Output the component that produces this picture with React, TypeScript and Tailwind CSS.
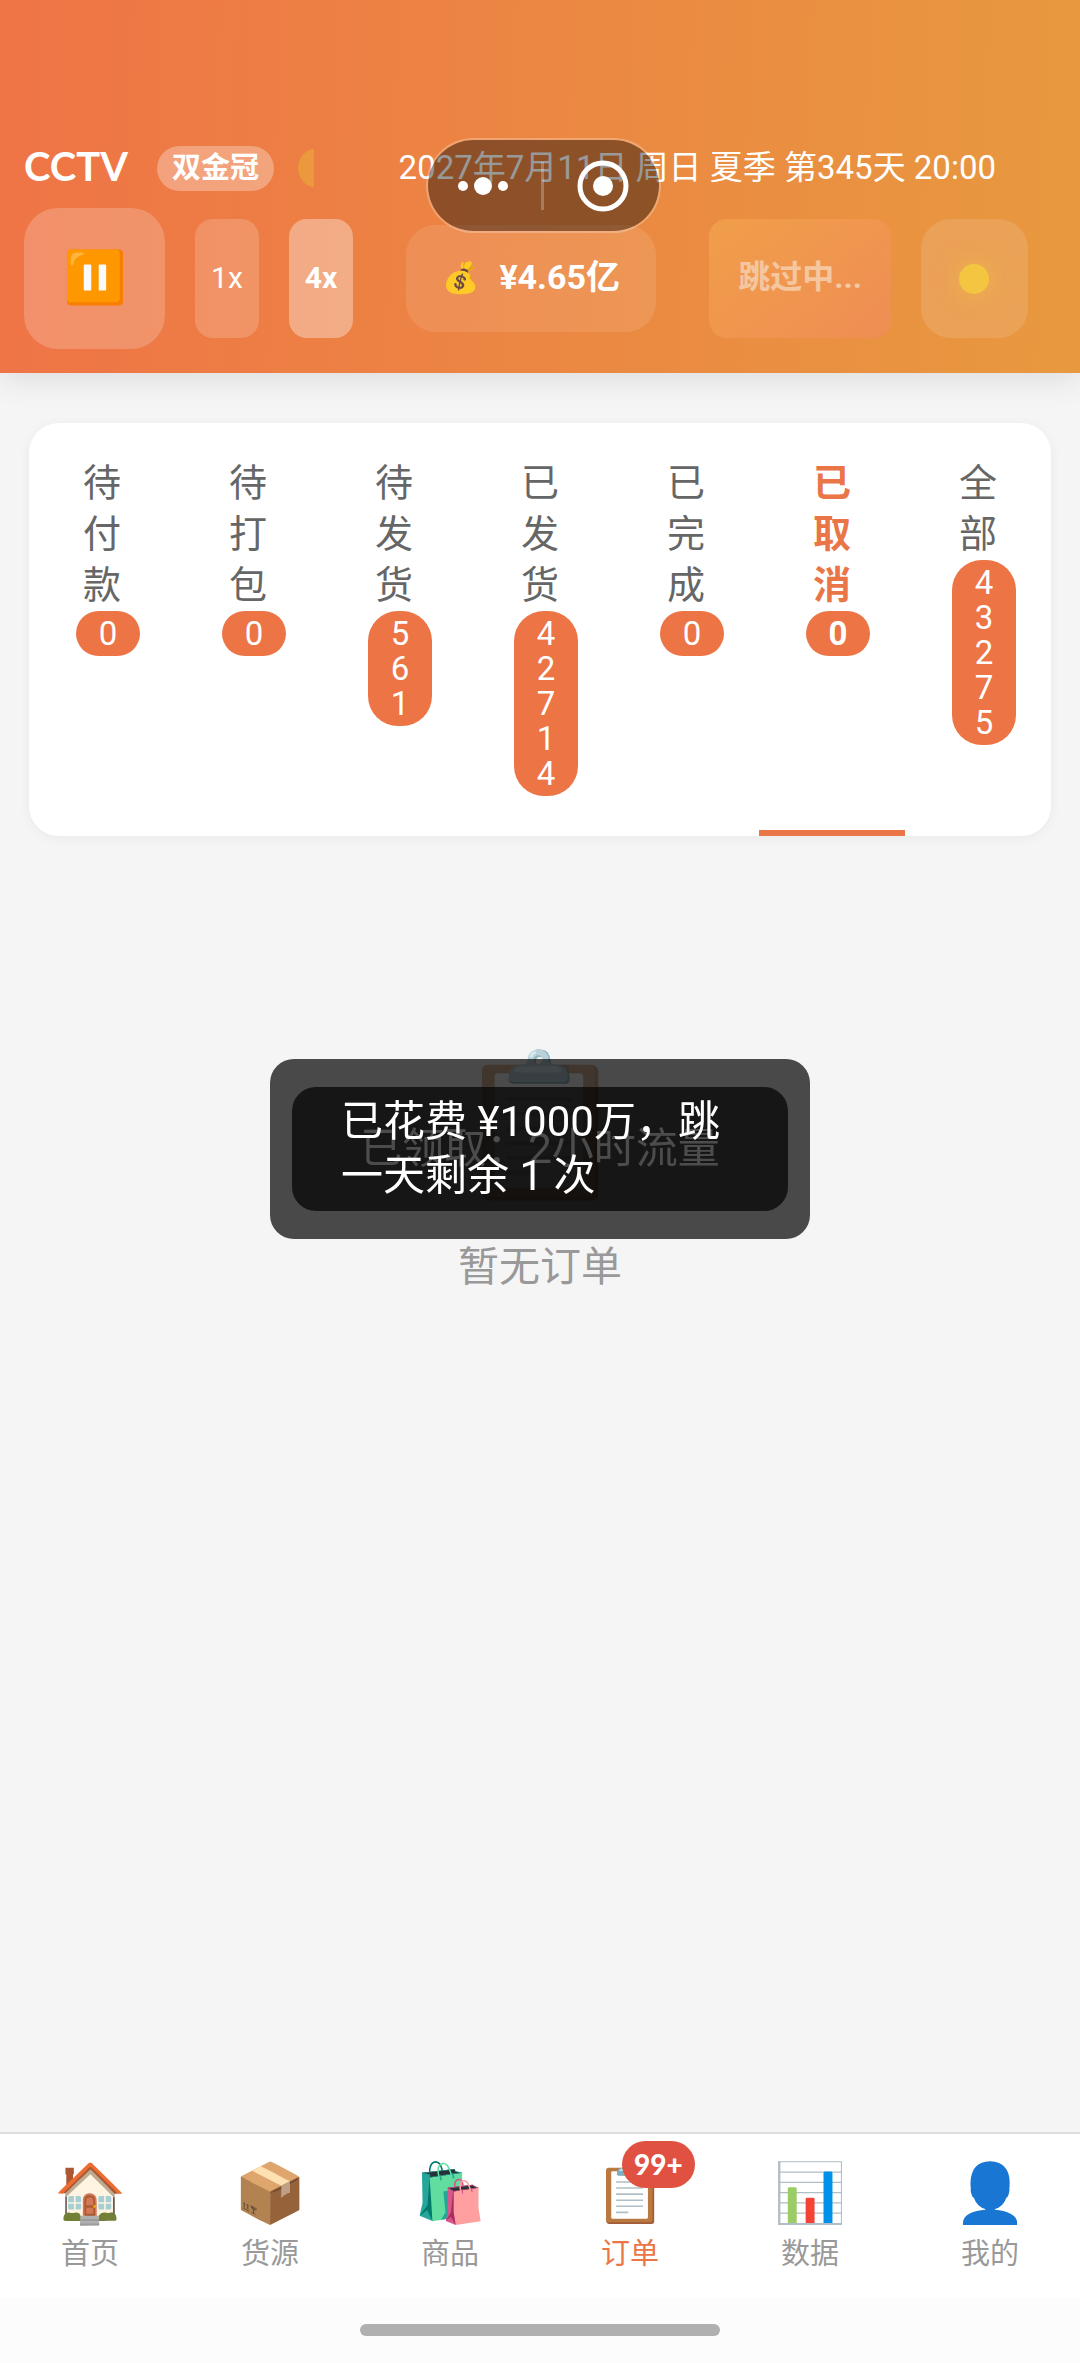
/**
 * Order list page of the shop game.
 * Shows the game clock header, the order status tabs and the bottom tab bar.
 */
import { useState } from "react";
import clsx from "clsx";

const orderTabs = [
  { label: "待付款", count: 0 },
  { label: "待打包", count: 0 },
  { label: "待发货", count: 561 },
  { label: "已发货", count: 42714 },
  { label: "已完成", count: 0 },
  { label: "已取消", count: 0 },
  { label: "全部", count: 43275 },
];

const navItems = [
  { label: "首页", icon: "🏠" },
  { label: "货源", icon: "📦" },
  { label: "商品", icon: "🛍️" },
  { label: "订单", icon: "📋", badge: "99+" },
  { label: "数据", icon: "📊" },
  { label: "我的", icon: "👤" },
];

export default function App() {
  return (
    <div className="flex min-h-screen flex-col bg-[#f5f5f5] font-['Roboto','Noto_Sans_CJK_SC',sans-serif]">
      <Header />
      <main className="flex flex-1 flex-col px-[29px] pt-[50px]">
        <OrderTabs />
        <EmptyState />
      </main>
      <BottomNav />
      <Toasts />
    </div>
  );
}

/**
 * Header with shop name, game date, speed controls and balance
 */
function Header() {
  const [speed, setSpeed] = useState(4);

  return (
    <header className="relative z-10 bg-linear-[92deg,#ef7446,#e8993f] pt-[144px] pb-6 text-white shadow-[0_6px_30px_rgba(0,0,0,0.1)]">
      <div className="flex h-12 items-center justify-between pr-[84px] pl-6">
        <div className="flex items-center">
          <h1 className="pb-1 font-['Lato',sans-serif] text-[40px] leading-11 font-bold">CCTV</h1>
          <span className="ml-[29px] rounded-full bg-white/30 px-[15px] text-[29px] leading-[45px] font-bold">
            双金冠
          </span>
          {/* Moon phase */}
          <svg className="ml-6" width="16" height="40" viewBox="0 0 16 40" aria-hidden="true">
            <circle cx="20" cy="20" r="20" fill="#ec983c" />
          </svg>
        </div>
        <time className="text-[33px] leading-12">2027年7月11日 周日 夏季 第345天 20:00</time>
      </div>

      <div className="mt-4 flex items-center justify-between pr-[52px] pl-6">
        <div className="flex items-center gap-[30px]">
          <button
            aria-label="暂停"
            className="grid size-[141px] place-items-center rounded-[34px] bg-white/20 pb-[3px] text-[51px] leading-none"
          >
            ⏸️
          </button>
          <SpeedButton value={1} active={speed === 1} onClick={() => setSpeed(1)} />
          <SpeedButton value={4} active={speed === 4} onClick={() => setSpeed(4)} />
        </div>

        <div className="flex h-[107px] items-center gap-5 rounded-[30px] bg-white/10 px-9 pb-[3px]">
          <span className="text-[30px]">💰</span>
          <span className="text-[34px] font-bold">¥4.65亿</span>
        </div>

        <div className="flex items-center gap-[30px]">
          <button
            disabled
            className="h-[119px] rounded-[18px] bg-linear-[135deg,#f7b052,#f58a68] px-[29px] pb-[3px] text-[32px] font-bold opacity-50"
          >
            跳过中...
          </button>
          <button aria-label="天气" className="grid h-[119px] w-[107px] place-items-center rounded-[30px] bg-white/12">
            <span className="size-[30px] rounded-full bg-[#f3c540] shadow-[0_0_24px_rgba(243,197,64,0.6)]" />
          </button>
        </div>
      </div>

      <Capsule />
    </header>
  );
}

function SpeedButton({ value, active, onClick }: { value: number; active: boolean; onClick: () => void }) {
  return (
    <button
      onClick={onClick}
      className={clsx(
        "h-[119px] rounded-[18px] px-4 pb-[3px] text-[30px]",
        active ? "bg-white/35 font-bold" : "bg-white/18"
      )}
    >
      {value}x
    </button>
  );
}

/**
 * Mini program capsule that floats over the header
 */
function Capsule() {
  return (
    <div className="absolute top-[138px] left-[426px] flex h-[95px] w-[235px] items-center justify-between rounded-full border-2 border-white/25 bg-black/40 bg-clip-padding px-[30px]">
      <button aria-label="更多">
        <svg width="50" height="20" viewBox="0 0 50 20" fill="#fff">
          <circle cx="5" cy="10" r="5" />
          <circle cx="25" cy="10" r="9" />
          <circle cx="45" cy="10" r="5" />
        </svg>
      </button>
      <span className="h-12 w-[3px] bg-white/25" />
      <button aria-label="关闭">
        <svg width="52" height="52" viewBox="0 0 52 52">
          <circle cx="26" cy="26" r="23" fill="none" stroke="#fff" strokeWidth="5" />
          <circle cx="26" cy="26" r="10" fill="#fff" />
        </svg>
      </button>
    </div>
  );
}

/**
 * Order status tabs, each label runs from top to bottom
 */
function OrderTabs() {
  const [current, setCurrent] = useState("已取消");

  return (
    <div role="tablist" className="flex h-[413px] overflow-hidden rounded-[30px] bg-white shadow-[0_2px_12px_rgba(0,0,0,0.05)]">
      {orderTabs.map((tab) => {
        const active = tab.label === current;
        return (
          <button
            key={tab.label}
            role="tab"
            aria-selected={active}
            onClick={() => setCurrent(tab.label)}
            className={clsx(
              "flex flex-1 flex-col items-center border-b-6 pt-[35px]",
              active ? "border-[#ea7648] font-bold text-[#ea7648]" : "border-transparent text-[#666]"
            )}
          >
            <span className="w-[38px] text-[38px] leading-[51px] break-all">{tab.label}</span>
            <span className="ml-3 w-16 rounded-[30px] bg-[#ec7445] px-[22px] py-[5px] text-[33px] leading-[35px] break-all text-white">
              {tab.count}
            </span>
          </button>
        );
      })}
    </div>
  );
}

function EmptyState() {
  return (
    <div className="flex flex-1 flex-col items-center pt-[206px]">
      <span className="text-[140px] leading-[168px] opacity-50">📋</span>
      <p className="mt-[30px] text-[41px] leading-[54px] text-[#999]">暂无订单</p>
    </div>
  );
}

/**
 * Two stacked toasts: the older one stays visible behind the newer one
 */
function Toasts() {
  return (
    <div className="pointer-events-none fixed inset-x-0 top-0 bottom-[65px] z-20 grid place-items-center text-[42px] leading-[54px] text-white">
      <div className="col-start-1 row-start-1 grid h-[180px] w-1/2 place-items-center rounded-3xl bg-black/70">
        已领取：2小时流量
      </div>
      <div className="col-start-1 row-start-1 w-[496px] rounded-3xl bg-black/70 px-[49px] py-2">
        已花费 ¥1000万，跳一天剩余 1 次
      </div>
    </div>
  );
}

function BottomNav() {
  return (
    <nav className="border-t-2 border-[#ddd] bg-white">
      <div className="flex h-[164px]">
        {navItems.map((item) => (
          <a
            key={item.label}
            href="#"
            className={clsx(
              "flex flex-1 flex-col items-center pt-[23px]",
              item.label === "订单" ? "text-[#ea7648]" : "text-[#999]"
            )}
          >
            <span className="relative text-[58px] leading-[72px]">
              {item.icon}
              {item.badge && (
                <span className="absolute -top-4 left-7 rounded-full bg-[#e05142] px-3 font-['Lato',sans-serif] text-[28px] leading-[47px] font-black text-white">
                  {item.badge}
                </span>
              )}
            </span>
            <span className="mt-[5px] text-[29px] leading-10">{item.label}</span>
          </a>
        ))}
      </div>
      {/* System gesture bar */}
      <div className="flex h-[65px] justify-center bg-[#fcfcfc] pt-[26px]">
        <span className="h-3 w-1/3 rounded-full bg-[#b0b0b0]" />
      </div>
    </nav>
  );
}
